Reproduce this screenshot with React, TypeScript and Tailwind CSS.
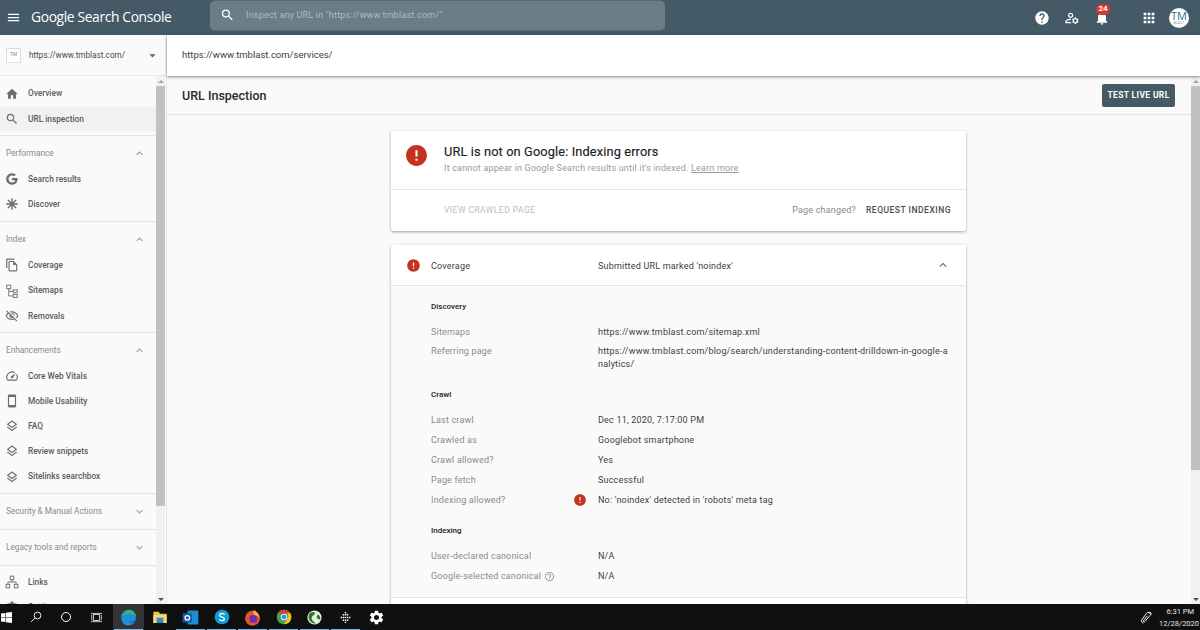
import React from "react";
import {
  MdMenu, MdSearch, MdHelp, MdApps, MdNotifications, MdHome, MdExpandLess, MdExpandMore,
  MdArrowDropDown, MdError, MdHelpOutline, MdOutlineFileCopy, MdOutlineVisibilityOff,
  MdOutlineSpeed, MdOutlineSmartphone, MdOutlineLayers, MdOutlineManageAccounts, MdSettings,
} from "react-icons/md";

const G = () => (
  <svg viewBox="0 0 24 24" className="h-[14px] w-[14px]" fill="#6b6f73">
    <path d="M12 10.2v3.9h5.500c-.5 2.400-2.600 3.900-5.500 3.900-3.300 0-6-2.700-6-6s2.700-6 6-6c1.500 0 2.800.5 3.800 1.400l2.900-2.900C17 2.900 14.700 2 12 2 6.500 2 2 6.500 2 12s4.500 10 10 10c5.800 0 9.600-4 9.600-9.800 0-.7-.1-1.300-.2-2z" />
  </svg>
);
const Burst = () => (
  <svg viewBox="0 0 24 24" className="h-[14px] w-[14px]" stroke="#6b6f73" strokeWidth="2.400" fill="none">
    <path d="M12 2v20M2 12h20M5 5l14 14M19 5L5 19" />
    <circle cx="12" cy="12" r="4" fill="#6b6f73" stroke="none" />
  </svg>
);
const Tree = () => (
  <svg viewBox="0 0 24 24" className="h-[14px] w-[14px]" stroke="#6b6f73" strokeWidth="1.600" fill="none">
    <rect x="3" y="2" width="7" height="6" />
    <rect x="14" y="10" width="7" height="5" />
    <rect x="14" y="18" width="7" height="5" />
    <path d="M6.500 8v12.500H14M6.500 12.500H14" />
  </svg>
);
const Net = () => (
  <svg viewBox="0 0 24 24" className="h-[14px] w-[14px]" stroke="#6b6f73" strokeWidth="1.600" fill="none">
    <rect x="9" y="2" width="6" height="6" />
    <rect x="2" y="16" width="6" height="6" />
    <rect x="16" y="16" width="6" height="6" />
    <path d="M12 8v4M5 16v-4h14v4" />
  </svg>
);

const ic = "h-[14px] w-[14px] text-[#6b6f73]";

function Item({ icon, label, active }: { icon: React.ReactNode; label: string; active?: boolean }) {
  return (
    <div className={`flex h-[25.2px] items-center pl-[5px] ${active ? "bg-[#f1f1f1]" : ""}`}>
      <span className="flex w-[23px] shrink-0 justify-start">{icon}</span>
      <span className="text-[8.300px] font-medium text-[#5a5a5a]">{label}</span>
    </div>
  );
}

function Section({ label, open = true, h = "h-[30px]", children }: { label: string; open?: boolean; h?: string; children?: React.ReactNode }) {
  return (
    <div className="border-b border-[#e4e4e4]">
      <div className={`flex ${h} items-center justify-between pl-[6px] pr-[10px] ${open ? "pt-[5px]" : ""}`}>
        <span className="text-[8.250px] leading-[11px] text-[#8a8a8a]">{label}</span>
        {open ? <MdExpandLess className="h-[13px] w-[13px] text-[#9a9a9a]" /> : <MdExpandMore className="h-[13px] w-[13px] text-[#9a9a9a]" />}
      </div>
      {children && <div className="pb-[4px]">{children}</div>}
    </div>
  );
}

function Row({ label, value, icon, cls = "h-[20px]" }: { label: React.ReactNode; value: React.ReactNode; icon?: boolean; cls?: string }) {
  return (
    <div className={`flex ${cls} items-center`}>
      <div className="relative flex w-[167px] shrink-0 items-center text-[9px] leading-[13px] tracking-[0.18px] text-[#8a8a8a]">
        {label}
        {icon && <MdError className="absolute left-[142px] h-[14px] w-[14px] text-[#c5321f]" />}
      </div>
      <div className="text-[9px] leading-[13px] tracking-[0.2px] text-[#3c4043]">{value}</div>
    </div>
  );
}

function Heading({ children, cls = "" }: { children: string; cls?: string }) {
  return <div className={`mb-[5px] flex h-[20px] items-center text-[8px] font-medium text-[#202124] ${cls}`}>{children}</div>;
}

function Tile({ children, active, line }: { children: React.ReactNode; active?: boolean; line?: boolean }) {
  return (
    <div className={`relative flex h-[26px] w-[31px] items-center justify-center ${active ? "bg-[#333333]" : ""}`}>
      {children}
      {line && <span className="absolute bottom-0 left-[1px] right-[1px] h-[1px] bg-[#76b9ed]" />}
    </div>
  );
}

function Scrollbar({ h }: { h: string }) {
  return (
    <div className="flex w-[9px] shrink-0 flex-col items-center bg-[#f1f1f1]">
      <span className="mt-[4px] h-0 w-0 border-x-[3px] border-b-[3px] border-x-transparent border-b-[#a3a3a3]" />
      <div className={`mt-[3px] w-full bg-[#c1c1c1] ${h}`} />
      <span className="mb-[3px] mt-auto h-0 w-0 border-x-[3px] border-t-[3px] border-x-transparent border-t-[#505050]" />
    </div>
  );
}

export default function App() {
  return (
    <div className="flex h-[630px] w-[1200px] flex-col overflow-hidden bg-[#fafafa] font-['Roboto',sans-serif]">
      {/* Top bar */}
      <header className="flex h-[35px] shrink-0 items-center bg-[#455a67]">
        <MdMenu className="ml-[6px] h-[15px] w-[15px] text-white" />
        <span className="ml-[10px] w-[179px] whitespace-nowrap font-['Open_Sans',sans-serif] text-[13.800px] tracking-[-0.35px] text-white">Google Search Console</span>
        <div className="flex h-[30px] w-[455px] -translate-y-[2.500px] items-center rounded-[5px] bg-[#6b7d87] pl-[10px]">
          <MdSearch className="h-[15px] w-[15px] text-white" />
          <span className="ml-[11px] text-[9px] tracking-[0.2px] text-[#b0bbc2]">Inspect any URL in "https://www.tmblast.com/"</span>
        </div>
        <div className="ml-auto flex items-center pr-[11px]">
          <MdHelp className="h-[16px] w-[16px] text-white" />
          <MdOutlineManageAccounts className="ml-[14px] h-[16px] w-[16px] text-white" />
          <div className="relative ml-[14px]">
            <MdNotifications className="h-[16px] w-[16px] text-white" />
            <span className="absolute -top-[6px] left-[2px] flex h-[11px] w-[14px] items-center justify-center rounded-full bg-[#d9362b] text-[8px] font-bold text-white">24</span>
          </div>
          <MdApps className="ml-[31px] h-[16px] w-[16px] text-white" />
          <div className="ml-[12px] flex h-[20px] w-[20px] flex-col items-center justify-center rounded-full bg-white">
            <span className="font-['Open_Sans',sans-serif] text-[11px] leading-[11px] text-[#2f6f8f]">TM</span>
            <span className="text-[3px] leading-[4px] tracking-[0.3px] text-[#7a8a90]">BLAST</span>
          </div>
        </div>
      </header>

      <div className="flex min-h-0 flex-1">
        {/* Sidebar */}
        <aside className="flex w-[167px] shrink-0 flex-col border-r border-[#e4e4e4] bg-[#fafafa]">
          <div className="flex h-[41px] shrink-0 items-center border-b border-[#e8e8e8] pl-[6px] pr-[6px]">
            <div className="flex h-[15px] w-[15px] items-center justify-center border border-[#dddddd] bg-white text-[5px] text-[#6c97aa]">TM</div>
            <span className="ml-[8px] text-[8.200px] text-[#4a4a4a]">https://www.tmblast.com/</span>
            <MdArrowDropDown className="ml-auto h-[15px] w-[15px] text-[#5f6368]" />
          </div>
          <div className="flex min-h-0 flex-1">
            <nav className="w-[156px] shrink-0 overflow-hidden">
              <div className="border-b border-[#e4e4e4] pb-[4px] pt-[5px]">
                <Item icon={<MdHome className={ic} />} label="Overview" />
                <Item icon={<MdSearch className={ic} />} label="URL inspection" active />
              </div>
              <Section label="Performance">
                <Item icon={<G />} label="Search results" />
                <Item icon={<Burst />} label="Discover" />
              </Section>
              <Section label="Index" h="h-[31px]">
                <Item icon={<MdOutlineFileCopy className={ic} />} label="Coverage" />
                <Item icon={<Tree />} label="Sitemaps" />
                <Item icon={<MdOutlineVisibilityOff className={ic} />} label="Removals" />
              </Section>
              <Section label="Enhancements">
                <Item icon={<MdOutlineSpeed className={ic} />} label="Core Web Vitals" />
                <Item icon={<MdOutlineSmartphone className={ic} />} label="Mobile Usability" />
                <Item icon={<MdOutlineLayers className={ic} />} label="FAQ" />
                <Item icon={<MdOutlineLayers className={ic} />} label="Review snippets" />
                <Item icon={<MdOutlineLayers className={ic} />} label="Sitelinks searchbox" />
              </Section>
              <Section label="Security & Manual Actions" open={false} h="h-[35px]" />
              <Section label="Legacy tools and reports" open={false} h="h-[35px]" />
              <div className="pt-[3px]">
                <Item icon={<Net />} label="Links" />
                <Item icon={<MdSettings className={ic} />} label="Settings" />
              </div>
            </nav>
            <Scrollbar h="h-[420px]" />
          </div>
        </aside>

        {/* Main */}
        <main className="flex min-w-0 flex-1 flex-col">
          <div className="relative z-10 flex h-[41px] shrink-0 items-center bg-white pl-[15px] text-[9.500px] text-[#3c4043] shadow-[0_1px_3px_rgba(0,0,0,0.45)]">
            https://www.tmblast.com/services/
          </div>
          <div className="flex min-h-0 flex-1">
            <div className="min-w-0 flex-1 overflow-hidden">
              <div className="flex h-[39px] items-center justify-between border-b border-[#e4e4e4] pl-[15px] pr-[16px]">
                <span className="pt-[2px] text-[12.500px] font-medium text-[#2a2b2d]">URL Inspection</span>
                <button className="flex h-[23px] w-[73px] items-center justify-center rounded-[2px] bg-[#455a64] text-[8.500px] font-bold tracking-[0.35px] text-white">TEST LIVE URL</button>
              </div>
              <div className="flex flex-col items-center pr-[1px] pt-[16px]">
                {/* Status card */}
                <section className="w-[575px] rounded-[2px] bg-white shadow-[0_1px_3px_rgba(0,0,0,0.35)]">
                  <div className="flex h-[59px] items-center border-b border-[#e4e4e4] pb-[1px] pl-[13px]">
                    <MdError className="mb-[8px] h-[25px] w-[25px] text-[#c5321f]" />
                    <div className="ml-[15px]">
                      <div className="text-[12.800px] leading-[16px] tracking-[0.12px] text-[#202124] [-webkit-text-stroke:0.15px_#202124]">URL is not on Google: Indexing errors</div>
                      <div className="mt-[2px] text-[9px] leading-[13px] tracking-[0.19px] text-[#9a9a9a]">
                        It cannot appear in Google Search results until it's indexed. <span className="underline">Learn more</span>
                      </div>
                    </div>
                  </div>
                  <div className="flex h-[41px] items-center justify-between pl-[53px] pr-[15px]">
                    <span className="text-[8.500px] tracking-[0.45px] text-[#bdbdbd]">VIEW CRAWLED PAGE</span>
                    <div className="flex items-center">
                      <span className="text-[9px] tracking-[0.2px] text-[#8a8a8a]">Page changed?</span>
                      <span className="ml-[10px] text-[8.500px] font-medium tracking-[0.5px] text-[#4a4d50]">REQUEST INDEXING</span>
                    </div>
                  </div>
                </section>

                {/* Coverage card */}
                <section className="mt-[14px] w-[575px] shrink-0 rounded-t-[2px] bg-[#fafafa] shadow-[0_1px_3px_rgba(0,0,0,0.35)]">
                  <div className="flex h-[41px] items-center border-b border-[#e4e4e4] bg-white pl-[15px] pr-[16px]">
                    <MdError className="h-[15px] w-[15px] text-[#c5321f]" />
                    <span className="ml-[10px] w-[167px] pt-[2px] text-[9px] leading-[13px] tracking-[0.2px] text-[#3c4043]">Coverage</span>
                    <span className="pt-[2px] text-[9px] leading-[13px] tracking-[0.2px] text-[#3c4043]">Submitted URL marked 'noindex'</span>
                    <MdExpandLess className="ml-auto h-[14px] w-[14px] text-[#5f6368]" />
                  </div>
                  <div className="border-b border-[#e4e4e4] pb-[11px] pl-[40px] pr-[16px] pt-[11px]">
                    <Heading>Discovery</Heading>
                    <Row label="Sitemaps" value="https://www.tmblast.com/sitemap.xml" />
                    <Row
                      cls="h-[32px]"
                      label={<span className="-mt-[13px]">Referring page</span>}
                      value={<>https://www.tmblast.com/blog/search/understanding-content-drilldown-in-google-a<br />nalytics/</>}
                    />
                    <Heading cls="mt-[11px]">Crawl</Heading>
                    <Row label="Last crawl" value="Dec 11, 2020, 7:17:00 PM" />
                    <Row label="Crawled as" value="Googlebot smartphone" />
                    <Row label="Crawl allowed?" value="Yes" />
                    <Row label="Page fetch" value="Successful" />
                    <Row label="Indexing allowed?" icon value="No: 'noindex' detected in 'robots' meta tag" />
                    <Heading cls="mt-[11px]">Indexing</Heading>
                    <Row label="User-declared canonical" value="N/A" />
                    <Row
                      label={<>Google-selected canonical<MdHelpOutline className="ml-[3px] h-[11px] w-[11px] text-[#9a9a9a]" /></>}
                      value="N/A"
                    />
                  </div>
                  <div className="h-[20px] bg-white" />
                </section>
              </div>
            </div>
            <Scrollbar h="h-[384px]" />
          </div>
        </main>
      </div>

      {/* Taskbar */}
      <footer className="flex h-[26px] shrink-0 items-center bg-[#101010] text-white">
        <div className="flex h-[26px] w-[21px] items-center justify-start pl-[1px]">
          <svg viewBox="0 0 16 16" className="h-[11px] w-[11px]" fill="#fff"><path d="M0 2.200 6.500 1.300v6.300H0zM7.300 1.200 16 0v7.600H7.300zM0 8.400h6.500v6.300L0 13.800zM7.300 8.400H16V16l-8.700-1.200z" /></svg>
        </div>
        <div className="flex h-[26px] w-[30px] items-center justify-center">
          <svg viewBox="0 0 16 16" className="h-[12px] w-[12px]" fill="none" stroke="#fff" strokeWidth="1.200"><circle cx="10" cy="6" r="4.500" /><path d="M6.800 9.200 1.500 14.500" /></svg>
        </div>
        <div className="flex h-[26px] w-[30px] items-center justify-center">
          <span className="h-[10px] w-[10px] rounded-full border-[1.500px] border-white" />
        </div>
        <div className="flex h-[26px] w-[32px] items-center justify-center pr-[2px]">
          <svg viewBox="0 0 16 16" className="h-[11px] w-[11px]" fill="none" stroke="#fff" strokeWidth="1.100"><rect x="3.500" y="3.500" width="9" height="9" /><path d="M0 2h16M0 14h16M1 4v8M15 4v8" /></svg>
        </div>
        <Tile active line>
          <svg viewBox="0 0 24 24" className="h-[17px] w-[17px]">
            <circle cx="12" cy="12" r="11" fill="#1b6fc2" />
            <path d="M3 15C3 8 9 5 13 5s9 3 9 8c0 3-3 4-6 4-2 0-3-1-3-2 0 3 3 6 6 5-2 2-5 3-8 3-5 0-8-4-8-8z" fill="#1f8fd8" />
            <path d="M2 12C3 6 8 1 13 1c5 0 9 4 10 10-2-3-6-4-9-4-5 0-9 2-12 5z" fill="#2db37d" />
          </svg>
        </Tile>
        <Tile>
          <svg viewBox="0 0 24 24" className="h-[16px] w-[16px]"><path d="M2 4h8l2 3h10v14H2z" fill="#f2c14a" /><rect x="2" y="9" width="20" height="12" fill="#f7d774" /><rect x="7" y="13" width="10" height="8" fill="#2f8fc9" /></svg>
        </Tile>
        <Tile line>
          <svg viewBox="0 0 24 24" className="h-[17px] w-[17px]"><rect x="8" y="2" width="15" height="20" rx="1" fill="#1a8fd8" /><rect x="1" y="6" width="13" height="13" rx="1" fill="#0f5ea8" /><circle cx="7.500" cy="12.500" r="3.200" fill="none" stroke="#fff" strokeWidth="1.800" /></svg>
        </Tile>
        <Tile line>
          <svg viewBox="0 0 24 24" className="h-[16px] w-[16px]"><circle cx="12" cy="12" r="11" fill="#0f9ddb" /><path d="M16 8.500C15 7 13.500 6.500 12 6.500c-2 0-3.500 1-3.500 2.800 0 3.700 7 2 7 5.300 0 1.800-1.600 2.900-3.500 2.900-1.800 0-3.200-.7-4-2.200" fill="none" stroke="#fff" strokeWidth="2" /></svg>
        </Tile>
        <Tile line>
          <svg viewBox="0 0 24 24" className="h-[17px] w-[17px]"><circle cx="12" cy="13" r="10.500" fill="#e8542d" /><circle cx="13" cy="14" r="5.500" fill="#6a2fb5" /><path d="M14 1c3 3 8 6 8 12-2-4-5-4-8-5-1-2-1-5 0-7z" fill="#fbb03b" /></svg>
        </Tile>
        <Tile line>
          <svg viewBox="0 0 24 24" className="h-[16px] w-[16px]"><circle cx="12" cy="12" r="11" fill="#3aa757" /><path d="M12 1a11 11 0 0 1 9.500 5.500H12a5.500 5.500 0 0 0-5 3L3.300 5.500A11 11 0 0 1 12 1z" fill="#e33e2b" /><path d="M21.500 6.500A11 11 0 0 1 12 23l5-8.500a5.500 5.500 0 0 0-.5-8z" fill="#fbc116" /><circle cx="12" cy="12" r="4.800" fill="#fff" /><circle cx="12" cy="12" r="3.700" fill="#4285f4" /></svg>
        </Tile>
        <Tile line>
          <svg viewBox="0 0 24 24" className="h-[17px] w-[17px]"><circle cx="12" cy="12" r="10" fill="#e6efd8" /><path d="M4 8c4-5 7-4 9-2-1 3-5 3-5 7 0 3 3 5 6 7-5 2-12-4-10-12zM16 8c3 0 5 3 4 7-2 0-4-1-5-3z" fill="#33752f" /></svg>
        </Tile>
        <Tile line>
          <svg viewBox="0 0 16 16" className="h-[11px] w-[11px]" fill="#fff"><path d="M7 0h2v2H7zM4 3h2v2H4zM7 3h2v2H7zM10 3h2v2h-2zM1 7h2v2H1zM4 7h2v2H4zM7 7h2v2H7zM10 7h2v2h-2zM13 7h2v2h-2zM4 11h2v2H4zM7 11h2v2H7zM10 11h2v2h-2zM7 14h2v2H7z" /></svg>
        </Tile>
        <Tile>
          <MdSettings className="h-[17px] w-[17px] text-white" />
        </Tile>
        <div className="ml-auto flex items-center pr-[1px] pt-[1px]">
          <svg viewBox="0 0 16 16" className="mr-[6px] h-[13px] w-[13px]" fill="none" stroke="#fff" strokeWidth="1.200"><path d="M4 15c-2-1-3-3-2-4l6-8c1-2 5-1 5 1 0 1-1 2-2 3l-5 6c-1 1-3 0-2-1l5-6M10 2c2-1 4 0 4 2" /></svg>
          <div className="flex flex-col items-end text-[7.500px] leading-[12px] text-[#e6e6e6]">
            <span className="pr-[5px]">6:31 PM</span>
            <span>12/28/2020</span>
          </div>
        </div>
      </footer>
    </div>
  );
}
